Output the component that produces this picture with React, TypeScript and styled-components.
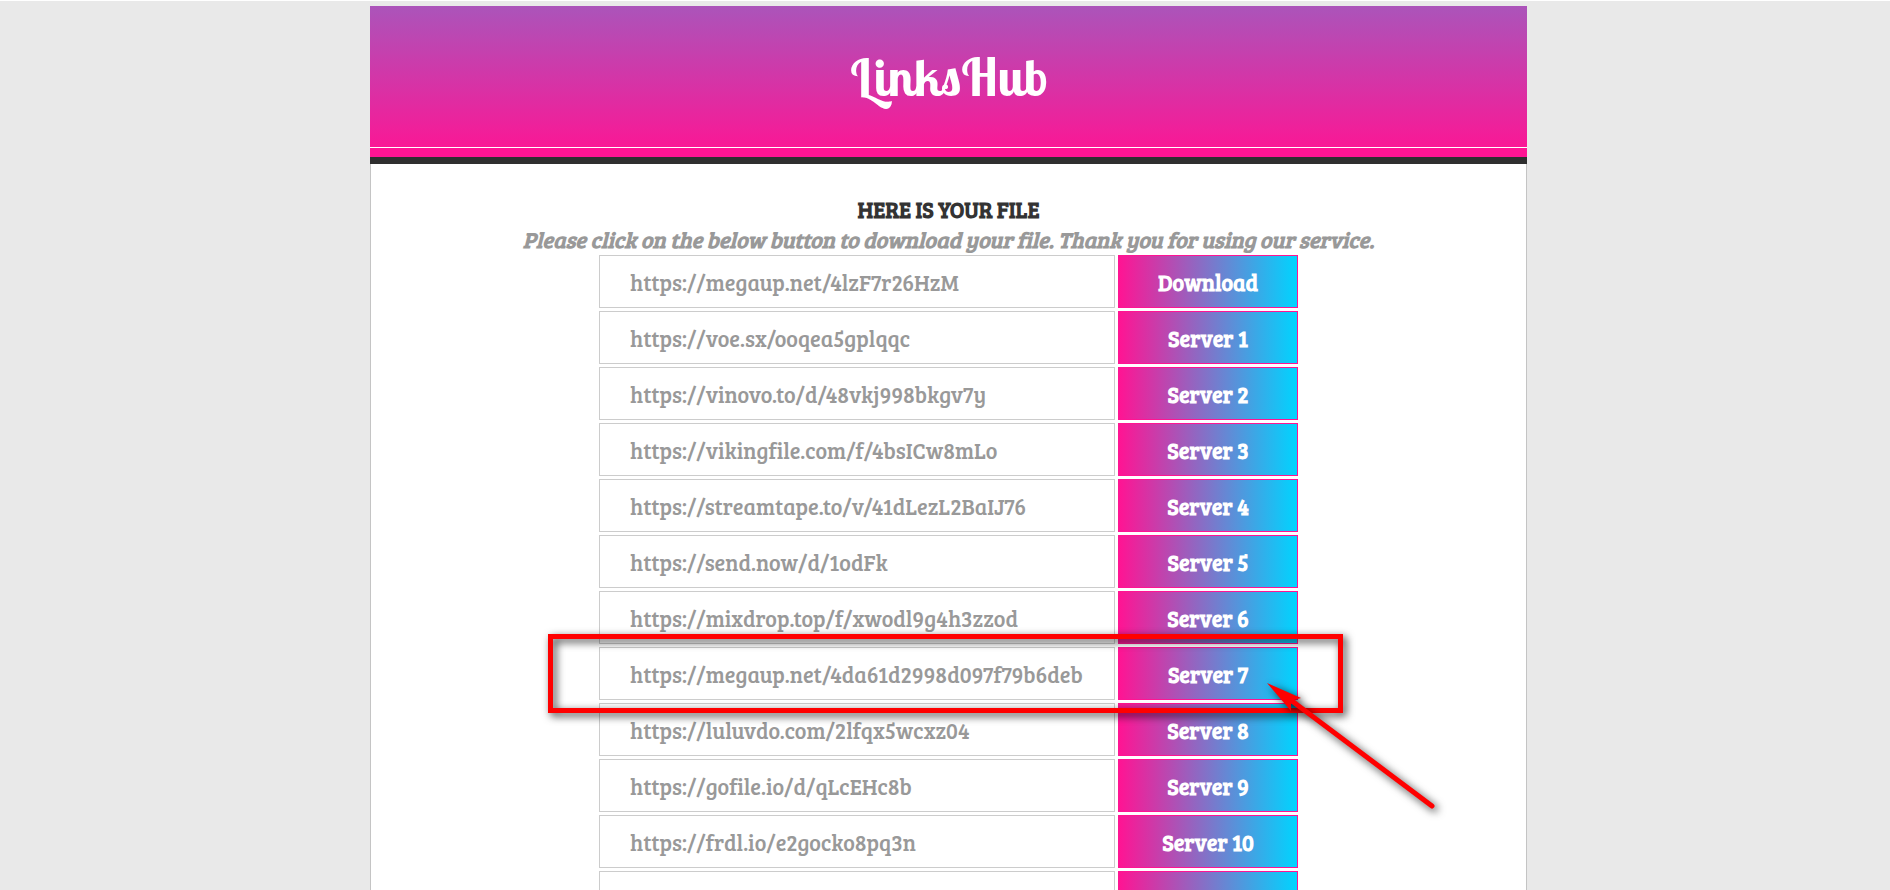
import React from 'react';
import styled, { createGlobalStyle } from 'styled-components';

const links = [
  { url: 'https://megaup.net/4lzF7r26HzM', label: 'Download' },
  { url: 'https://voe.sx/ooqea5gplqqc', label: 'Server 1' },
  { url: 'https://vinovo.to/d/48vkj998bkgv7y', label: 'Server 2' },
  { url: 'https://vikingfile.com/f/4bsICw8mLo', label: 'Server 3' },
  { url: 'https://streamtape.to/v/41dLezL2BaIJ76', label: 'Server 4' },
  { url: 'https://send.now/d/1odFk', label: 'Server 5' },
  { url: 'https://mixdrop.top/f/xwodl9g4h3zzod', label: 'Server 6' },
  { url: 'https://megaup.net/4da61d2998d097f79b6deb', label: 'Server 7', marked: true },
  { url: 'https://luluvdo.com/2lfqx5wcxz04', label: 'Server 8' },
  { url: 'https://gofile.io/d/qLcEHc8b', label: 'Server 9' },
  { url: 'https://frdl.io/e2gocko8pq3n', label: 'Server 10' },
  { url: '', label: '' },
];

const serif = `'Bree Serif', 'DejaVu Serif Condensed', 'DejaVu Serif', serif`;

const GlobalStyle = createGlobalStyle`
  *, *::before, *::after { box-sizing: border-box; }
  html { height: 100%; overflow: hidden; }
  body {
    margin: 0;
    height: 100%;
    overflow: hidden;
    background: #e9e9e9;
    border-top: 1px solid #fff;
    font-family: ${serif};
  }
`;

const Page = styled.div`
  padding: 5px 0 0 7px;
`;

const Container = styled.div`
  width: 100%;
  max-width: 1157px;
  margin: 0 auto;
`;

const Header = styled.header`
  background: linear-gradient(to bottom, #ab54ba, #ff1493 151px);
  border-bottom: 1px solid #fff;
  height: 142px;
  display: flex;
  align-items: center;
  justify-content: center;
`;

const Logo = styled.a`
  color: #fff;
  text-decoration: none;
  font: 700 52px/60px 'Lobster Two', 'Lobster', 'Liberation Serif', serif;
`;

const Nav = styled.div`
  height: 16px;
  background: #ff1493;
  border-bottom: 7px solid #2f2f2f;
`;

const Content = styled.main`
  background: #fff;
  border: 1px solid #c4c4c4;
  border-width: 0 1px;
  padding: 30px 20px 40px;
  text-align: center;
`;

const Title = styled.h1`
  margin: 0;
  color: #333;
  font-size: 22px;
  line-height: 30px;
  text-transform: uppercase;
`;

const Note = styled.p`
  margin: 0 0 1px;
  color: #999;
  font-size: 22px;
  font-style: italic;
  font-weight: 700;
  line-height: 30px;
`;

const List = styled.div`
  display: grid;
  gap: 3px;
  width: 100%;
  max-width: 699px;
  margin: 0 auto;
`;

const Row = styled.form`
  position: relative;
  display: grid;
  grid-template-columns: 1fr 180px;
  gap: 3px;
  height: 53px;
`;

const UrlField = styled.input`
  min-width: 0;
  padding: 0 30px;
  border: 1px solid #ccc;
  border-radius: 0;
  background: #fff;
  color: #999;
  font-family: inherit;
  font-size: 22px;
`;

const ServerButton = styled.button`
  border: 1px solid #ff1493;
  background: linear-gradient(to right, #ff1493, #00d4ff);
  color: #fff;
  font-family: inherit;
  font-size: 22px;
  font-weight: 700;
`;

const Highlight = styled.span`
  position: absolute;
  inset: -13px -45px -13px -51px;
  border: 5px solid #f00;
  filter: drop-shadow(3px 3px 4px rgba(0, 0, 0, 0.8));
  pointer-events: none;
  z-index: 1;
`;

const Arrow = styled.svg`
  position: absolute;
  left: 661px;
  top: 33px;
  z-index: 2;
  overflow: visible;
  filter: drop-shadow(3px 3px 4px rgba(0, 0, 0, 0.8));
  pointer-events: none;
`;

export default function App() {
  return (
    <Page>
      <GlobalStyle />
      <Container>
        <Header>
          <Logo href="#">LinksHub</Logo>
        </Header>
        <Nav />
        <Content>
          <Title>Here is your file</Title>
          <Note>Please click on the below button to download your file. Thank you for using our service.</Note>
          <List>
            {links.map(({ url, label, marked }, index) => (
              <Row key={index} onSubmit={(e) => e.preventDefault()}>
                <UrlField type="text" readOnly value={url} aria-label={`Link ${index + 1}`} />
                <ServerButton type="submit" aria-label={label || `Server ${index}`}>{label}</ServerButton>
                {marked && (
                  <>
                    <Highlight />
                    <Arrow width="180" height="134" viewBox="0 0 180 134" aria-hidden="true">
                      <path d="M7 3 41 18 34 20 31 24 31 31Z" fill="#f00" />
                      <path d="M32 21 172 126" stroke="#f00" strokeWidth="5" strokeLinecap="round" />
                    </Arrow>
                  </>
                )}
              </Row>
            ))}
          </List>
        </Content>
      </Container>
    </Page>
  );
}
